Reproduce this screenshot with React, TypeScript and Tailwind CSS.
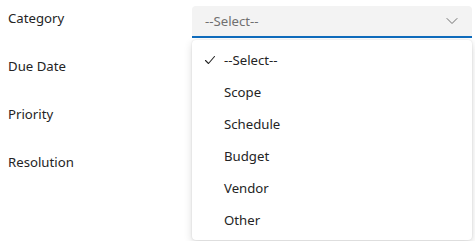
import React from "react";

const options = ["--Select--", "Scope", "Schedule", "Budget", "Vendor", "Other"];
const labels = ["Category", "Due Date", "Priority", "Resolution"];

export default function App() {
  return (
    <div
      className="relative w-[475px] h-[241px] bg-white overflow-hidden text-[13.2px] text-[#242424]"
      style={{ fontFamily: '"Segoe UI", "Noto Sans", "Open Sans", sans-serif' }}
    >
      <div className="flex">
        <div className="flex flex-col w-[192px] pl-2 pt-[8px]">
          {labels.map((l) => (
            <div key={l} className="h-[48px] leading-[20px]">
              {l}
            </div>
          ))}
        </div>
        <div className="flex flex-col pt-[6px]">
          <div className="w-[280px] h-[32px] bg-[#f3f3f3] rounded-t-[4px] border-b-2 border-[#0f6cbd] flex items-center justify-between pl-[13px] pr-[14px]">
            <span className="text-[#707070] leading-[20px]">--Select--</span>
            <svg width="12" height="12" viewBox="0 0 12 12" className="mt-[-1px]">
              <path d="M1 3.5 L6 8.5 L11 3.5" fill="none" stroke="#707070" strokeWidth="1" strokeLinecap="round" strokeLinejoin="round" />
            </svg>
          </div>
        </div>
      </div>
      <div className="absolute left-[192px] top-[40px] w-[280px] h-[200px] bg-white rounded-[4px] shadow-[0_0_2px_rgba(0,0,0,0.12),0_3px_8px_rgba(0,0,0,0.14)] py-[4px]">
        {options.map((o, i) => (
          <div key={o} className="h-[32px] flex items-center">
            <div className="w-[32px] flex justify-end pr-[8px]">
              {i === 0 && (
                <svg width="12" height="12" viewBox="0 0 12 12">
                  <path d="M1.5 6.5 L4.5 9.5 L10.5 2.5" fill="none" stroke="#242424" strokeWidth="1.1" strokeLinecap="round" strokeLinejoin="round" />
                </svg>
              )}
            </div>
            <span className="leading-[20px]">{o}</span>
          </div>
        ))}
      </div>
    </div>
  );
}
